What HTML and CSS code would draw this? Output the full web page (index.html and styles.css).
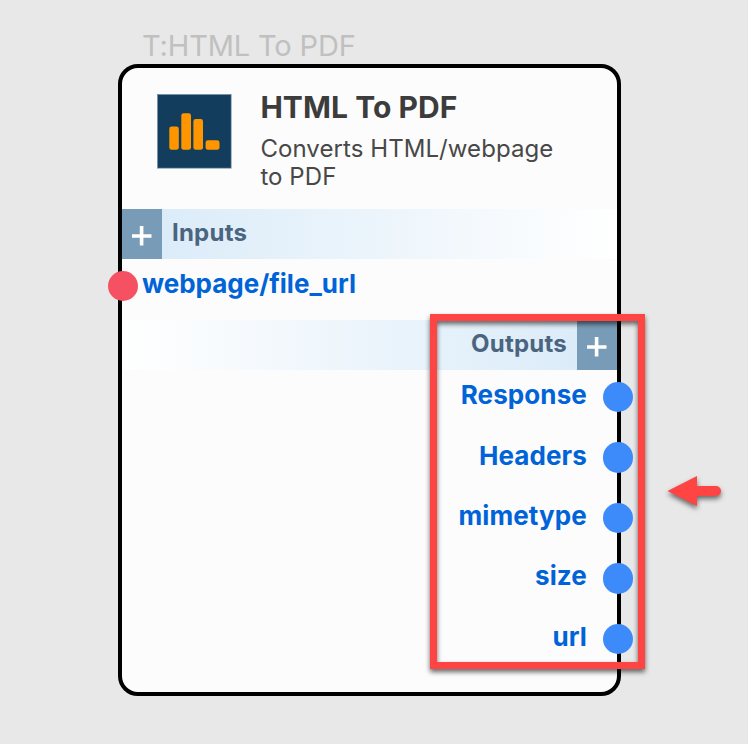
FILE: index.html
```html
<!DOCTYPE html>
<html lang="en">
<head>
<meta charset="utf-8">
<title>HTML To PDF</title>
<link rel="stylesheet" href="styles.css">
</head>
<body>
<main class="canvas">
  <div class="node-label"><span>T:HTML To PDF</span></div>
  <article class="node">
    <header class="head">
      <svg class="logo" viewBox="0 0 75 75" width="75" height="75">
        <rect width="74.6" height="74.6" fill="#7792a6"/>
        <rect x="1" y="1" width="72.8" height="72.8" fill="#133d5d"/>
        <g fill="#ff9600">
          <rect x="12.3" y="32.6" width="9.5" height="23.2" rx="2.4"/>
          <rect x="24.3" y="19.2" width="9.7" height="36.6" rx="2.4"/>
          <rect x="36.4" y="25" width="9.6" height="30.8" rx="2.4"/>
          <rect x="48.6" y="46.3" width="13.9" height="9.5" rx="2.4"/>
        </g>
      </svg>
      <div class="info">
        <h1><span>HTML To PDF</span></h1>
        <p>Converts HTML/webpage<br>to PDF</p>
      </div>
    </header>
    <section>
      <div class="band inputs">
        <button class="add" aria-label="Add input"><svg width="20" height="20"><path d="M0 10H19.5M9.6 0V19.5" stroke="#fff" stroke-width="3.6"/></svg></button>
        <h2>Inputs</h2>
      </div>
      <div class="port in"><i class="dot"></i><span>webpage/file_url</span></div>
    </section>
    <section>
      <div class="band outputs">
        <h2>Outputs</h2>
        <button class="add" aria-label="Add output"><svg width="20" height="20"><path d="M0 10H19.5M9.6 0V19.5" stroke="#fff" stroke-width="3.6"/></svg></button>
      </div>
      <div class="port out"><span>Response</span><i class="dot"></i></div>
      <div class="port out"><span>Headers</span><i class="dot"></i></div>
      <div class="port out"><span>mimetype</span><i class="dot"></i></div>
      <div class="port out"><span>size</span><i class="dot"></i></div>
      <div class="port out"><span>url</span><i class="dot"></i></div>
    </section>
  </article>
  <div class="highlight"></div>
  <svg class="arrow" width="56" height="32" viewBox="0 0 56 32">
    <path d="M0.5 16L30 1V11H49a5 5 0 0 1 0 10H30V31Z" fill="#ff4444"/>
  </svg>
</main>
</body>
</html>
```
FILE: styles.css
```css
* { box-sizing: border-box; }
body {
  margin: 0;
  background: #e8e8e8;
  font-family: Inter, "Liberation Sans", sans-serif;
  font-feature-settings: "calt" 0;
}
.canvas {
  position: relative;
  width: 748px;
  height: 744px;
  padding: 28px 0 0 118px;
  overflow: hidden;
}
.node-label {
  height: 36px;
  padding-left: 24px;
  font-size: 29px;
  font-weight: 400;
  line-height: 36px;
  letter-spacing: -0.15px;
  color: #c0c0c0;
  white-space: nowrap;
}
.node {
  width: 503px;
  height: 632px;
  border: 4px solid #000;
  border-radius: 20px;
  background: #fcfcfc;
}
.head {
  display: flex;
  height: 141px;
  padding: 26px 0 0 35px;
}
.logo { display: block; flex: none; }
.info { margin-left: 28.4px; color: #3c3c3c; white-space: nowrap; }
h1 {
  margin: -5px 0 0;
  font-size: 30px;
  line-height: 36px;
  font-weight: 700;
  letter-spacing: 0.06px;
}
p {
  margin: 10px 0 0;
  font-size: 24px;
  font-weight: 400;
  line-height: 28px;
  letter-spacing: 0.07px;
  color: #484848;
}
.band { display: flex; height: 50px; }
.inputs { background: linear-gradient(90deg, #d8eaf8, #fff); }
.outputs { background: linear-gradient(90deg, #fff, #d8eaf8); justify-content: flex-end; }
h2 {
  margin: 0 10px;
  font-size: 24px;
  line-height: 47px;
  font-weight: 700;
  letter-spacing: 0.22px;
  color: #4b6580;
}
.add {
  display: flex;
  align-items: center;
  justify-content: center;
  width: 40px;
  height: 50px;
  padding: 3px 0 0;
  border: 0;
  background: #789cb7;
}
.port {
  display: flex;
  font-size: 26px;
  font-weight: 700;
  color: #0064d8;
  line-height: 32px;
  white-space: nowrap;
}
.dot {
  flex: none;
  width: 30.4px;
  height: 30.4px;
  border-radius: 50%;
}
.in { height: 61px; padding-top: 9px; margin-left: -14.5px; }
.in .dot { margin: 3px 4px 0 0; background: #f55163; }
.out {
  height: 60.4px;
  padding-top: 9.3px;
  margin-right: -16.3px;
  justify-content: flex-end;
  letter-spacing: 0.1px;
}
.out .dot { margin: 2.7px 0 0 16px; background: #3d8bfb; }
.highlight {
  position: absolute;
  left: 430px;
  top: 314px;
  width: 215px;
  height: 355px;
  border: 7px solid #ff4444;
  filter: drop-shadow(0 3px 2.5px rgba(0, 0, 0, .6));
}
.arrow {
  position: absolute;
  left: 667px;
  top: 475px;
  overflow: visible;
  filter: drop-shadow(0 3px 2.5px rgba(0, 0, 0, .55));
}
```
